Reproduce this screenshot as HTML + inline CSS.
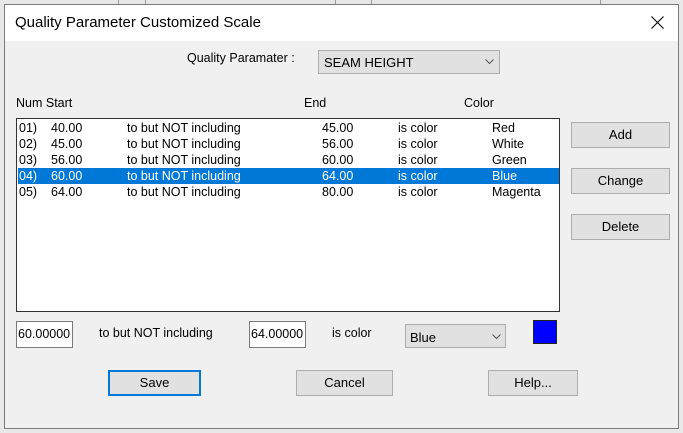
<!DOCTYPE html><html><head><style>
body{margin:0;width:683px;height:433px;background:#e8e8e8;position:relative;overflow:hidden;font-family:"Liberation Sans",sans-serif;font-size:12px;color:#000}
.a{position:absolute}
.dlg{left:4px;top:4px;width:675px;height:425px;background:#f0f0f0;border:1px solid #7a7a7a;box-sizing:border-box}
.title{left:5px;top:5px;width:673px;height:36px;background:#fff}
.btn{position:absolute;background:#e1e1e1;border:1px solid #adadad;box-sizing:border-box;text-align:center;font-size:13px}
.inp{position:absolute;background:#fff;border:1px solid #7a7a7a;box-sizing:border-box;font-size:12.5px;padding-left:1px}
.row{position:absolute;left:1px;width:541px;height:16px;font-size:12.5px;line-height:16px}
.row span{position:absolute}
.sel{background:#0078d7;color:#fff}
.sb{position:absolute;background:#e1e1e1;border:1px solid #adadad;box-sizing:border-box;font-size:13px}
</style></head><body>
<div class="a" style="left:118px;top:0;width:1px;height:5px;background:#999"></div>
<div class="a" style="left:145px;top:0;width:1px;height:5px;background:#999"></div>
<div class="a" style="left:335px;top:0;width:1px;height:5px;background:#999"></div>
<div class="a" style="left:371px;top:0;width:1px;height:5px;background:#999"></div>
<div class="a" style="left:600px;top:0;width:1px;height:5px;background:#999"></div>
<div class="a dlg"></div>
<div class="a title"></div>
<div class="a" style="left:15px;top:14px;font-size:15px">Quality Parameter Customized Scale</div>
<svg class="a" style="left:651px;top:16px" width="13" height="13"><path d="M0.5 0.5L12.5 12.5M12.5 0.5L0.5 12.5" stroke="#000" stroke-width="1.1"/></svg>
<div class="a" style="left:187px;top:51px;font-size:12.5px">Quality Paramater :</div>
<div class="sb" style="left:318px;top:50px;width:182px;height:24px"><span class="a" style="left:5px;top:4px">SEAM HEIGHT</span><svg class="a" style="left:166px;top:8px" width="9" height="6"><path d="M0.5 0.5L4.5 4.5L8.5 0.5" stroke="#555" fill="none"/></svg></div>
<div class="a" style="left:16px;top:96px;font-size:12.5px">Num Start</div>
<div class="a" style="left:304px;top:96px;font-size:12.5px">End</div>
<div class="a" style="left:464px;top:96px;font-size:12.5px">Color</div>
<div class="a" style="left:16px;top:118px;width:544px;height:194px;background:#fff;border:1px solid #333;box-sizing:border-box">
<div class="row" style="top:1px"><span style="left:1px">01)</span><span style="left:33px">40.00</span><span style="left:109px">to but NOT including</span><span style="left:304px">45.00</span><span style="left:380px">is color</span><span style="left:474px">Red</span></div>
<div class="row" style="top:17px"><span style="left:1px">02)</span><span style="left:33px">45.00</span><span style="left:109px">to but NOT including</span><span style="left:304px">56.00</span><span style="left:380px">is color</span><span style="left:474px">White</span></div>
<div class="row" style="top:33px"><span style="left:1px">03)</span><span style="left:33px">56.00</span><span style="left:109px">to but NOT including</span><span style="left:304px">60.00</span><span style="left:380px">is color</span><span style="left:474px">Green</span></div>
<div class="row sel" style="top:49px"><span style="left:1px">04)</span><span style="left:33px">60.00</span><span style="left:109px">to but NOT including</span><span style="left:304px">64.00</span><span style="left:380px">is color</span><span style="left:474px">Blue</span></div>
<div class="row" style="top:65px"><span style="left:1px">05)</span><span style="left:33px">64.00</span><span style="left:109px">to but NOT including</span><span style="left:304px">80.00</span><span style="left:380px">is color</span><span style="left:474px">Magenta</span></div>
</div>
<div class="btn" style="left:571px;top:122px;width:99px;height:26px;line-height:24px">Add</div>
<div class="btn" style="left:571px;top:168px;width:99px;height:26px;line-height:24px">Change</div>
<div class="btn" style="left:571px;top:214px;width:99px;height:26px;line-height:24px">Delete</div>
<div class="inp" style="left:16px;top:321px;width:57px;height:27px;line-height:25px">60.00000</div>
<div class="a" style="left:99px;top:326px;font-size:12.5px">to but NOT including</div>
<div class="inp" style="left:249px;top:321px;width:57px;height:27px;line-height:25px">64.00000</div>
<div class="a" style="left:332px;top:326px;font-size:12.5px">is color</div>
<div class="sb" style="left:405px;top:324px;width:101px;height:24px"><span class="a" style="left:4px;top:5px">Blue</span><svg class="a" style="left:86px;top:9px" width="9" height="6"><path d="M0.5 0.5L4.5 4.5L8.5 0.5" stroke="#555" fill="none"/></svg></div>
<div class="a" style="left:533px;top:320px;width:24px;height:24px;background:#0000ff;border:1px solid #222;box-sizing:border-box"></div>
<div class="btn" style="left:108px;top:370px;width:93px;height:26px;line-height:22px;border:2px solid #0078d7">Save</div>
<div class="btn" style="left:296px;top:370px;width:97px;height:26px;line-height:24px">Cancel</div>
<div class="btn" style="left:488px;top:370px;width:90px;height:26px;line-height:24px">Help...</div>
</body></html>
